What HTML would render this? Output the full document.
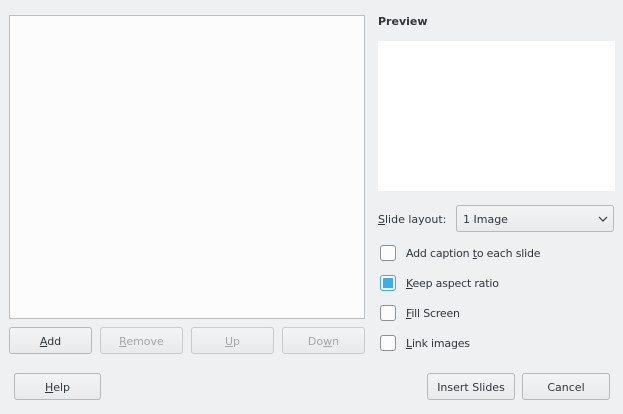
<!DOCTYPE html>
<html><head><style>
body{margin:0;width:623px;height:414px;background:#eff0f1;font-family:"DejaVu Sans","Liberation Sans",sans-serif;font-size:11px;color:#31363b;position:relative;overflow:hidden}
.a{position:absolute}
.btn{position:absolute;box-sizing:border-box;border:1px solid #b6b8ba;border-radius:3px;background:linear-gradient(#f3f4f5,#e9eaeb);text-align:center;line-height:27px;height:27px}
.dis{color:#a4a6a8;border-color:#c9cbcd}
.cb{position:absolute;left:380px;width:16px;height:16px;box-sizing:border-box;border:1px solid #8e9194;border-radius:3px;background:#fcfcfc}
.lbl{position:absolute;left:406px;letter-spacing:-0.2px}
u{text-decoration:underline}
</style></head><body>
<div class="a" style="left:9px;top:15px;width:354px;height:302px;background:#fcfcfc;border:1px solid #bcbebf"></div>
<div class="a" style="left:378px;top:15px;font-weight:bold">Preview</div>
<div class="a" style="left:378px;top:41px;width:237px;height:150px;background:#fff"></div>
<div class="a" style="left:378px;top:213px"><u>S</u>lide layout:</div>
<div class="btn" style="left:456px;top:205px;width:158px;text-align:left;padding-left:6px">1 Image
<svg class="a" style="right:5px;top:10px" width="10" height="7"><path d="M1 1L5 5L9 1" stroke="#31363b" fill="none" stroke-width="1.2"/></svg></div>
<div class="cb" style="top:245px"></div><div class="lbl" style="top:247px">Add caption <u>t</u>o each slide</div>
<div class="cb" style="top:275px;border-color:#3daee9"><div class="a" style="left:2px;top:2px;width:10px;height:10px;background:#3daee9"></div></div><div class="lbl" style="top:277px"><u>K</u>eep aspect ratio</div>
<div class="cb" style="top:305px"></div><div class="lbl" style="top:307px"><u>F</u>ill Screen</div>
<div class="cb" style="top:335px"></div><div class="lbl" style="top:337px"><u>L</u>ink images</div>
<div class="btn" style="left:9px;top:327px;width:83px"><u>A</u>dd</div>
<div class="btn dis" style="left:100px;top:327px;width:83px"><u>R</u>emove</div>
<div class="btn dis" style="left:191px;top:327px;width:83px"><u>U</u>p</div>
<div class="btn dis" style="left:282px;top:327px;width:83px">Do<u>w</u>n</div>
<div class="btn" style="left:14px;top:373px;width:87px"><u>H</u>elp</div>
<div class="btn" style="left:427px;top:373px;width:88px">Insert Slides</div>
<div class="btn" style="left:522px;top:373px;width:88px">Cancel</div>
</body></html>
